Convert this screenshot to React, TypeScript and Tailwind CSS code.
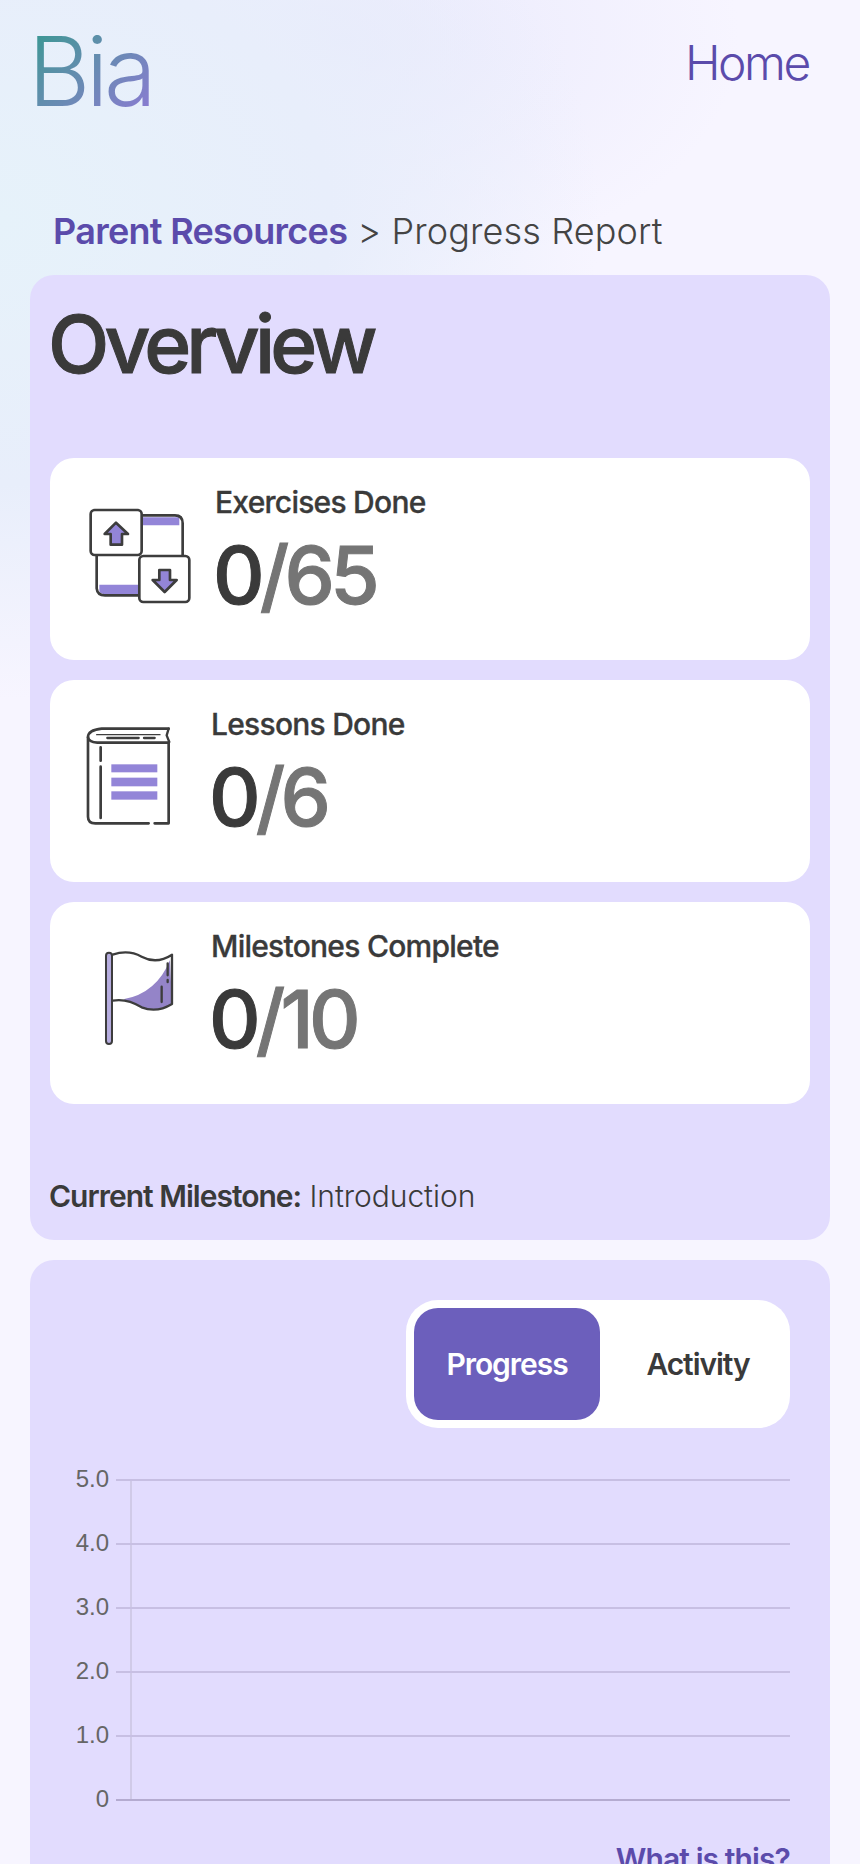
import React from 'react';

const ink = '#3d3d3d';

const ExercisesIcon = () => (
  <svg viewBox="0 0 165 202" className="w-[165px] h-[202px] shrink-0">
    <g transform="translate(10,22) scale(0.3333)" fill="none" stroke={ink} strokeLinejoin="round" strokeLinecap="round">
      <path d="M245 112 H358 V136 H245 Z" fill="#9385d8" stroke="none" />
      <path d="M118 314 H236 V342 H130 Q118 340 118 330 Z" fill="#9385d8" stroke="none" />
      <path d="M245 106 H345 Q368 106 368 130 V228" strokeWidth="8" />
      <path d="M110 228 V325 Q112 346 135 346 H236" strokeWidth="8" />
      <rect x="92" y="90" width="153" height="135" rx="12" fill="#fff" strokeWidth="8" />
      <rect x="238" y="228" width="150" height="138" rx="12" fill="#fff" strokeWidth="8" />
      <path d="M168 128 L204 162 H186 V194 H152 V162 H134 Z" fill="#9385d8" strokeWidth="8" />
      <path d="M314 336 L350 300 H330 V270 H298 V300 H278 Z" fill="#9385d8" strokeWidth="8" />
    </g>
  </svg>
);

const BookIcon = () => (
  <svg viewBox="0 0 161 202" className="w-[161px] h-[202px] shrink-0">
    <g transform="translate(10,20) scale(0.3333)" fill="none" stroke={ink} strokeLinecap="round" strokeLinejoin="round">
      <path d="M326 86 H125 Q84 90 84 112 Q86 126 112 128 H326" strokeWidth="8" />
      <path d="M326 86 L320 106 L328 126" strokeWidth="7" />
      <path d="M110 104 H300" strokeWidth="4" />
      <path d="M142 114 H236 M252 114 H284" strokeWidth="7" />
      <path d="M84 112 V350 Q84 370 106 370 H266 M284 370 H326 V128" strokeWidth="8" />
      <path d="M122 142 V182 M122 200 V354" strokeWidth="8" />
      <rect x="154" y="193" width="138" height="24" fill="#9385d8" stroke="none" />
      <rect x="154" y="233" width="138" height="26" fill="#9385d8" stroke="none" />
      <rect x="154" y="274" width="138" height="25" fill="#9385d8" stroke="none" />
    </g>
  </svg>
);

const FlagIcon = () => (
  <svg viewBox="0 0 161 202" className="w-[161px] h-[202px] shrink-0">
    <g transform="translate(10,28) scale(0.3333)" fill="none" stroke={ink} strokeLinecap="round" strokeLinejoin="round">
      <path d="M190 208 Q290 190 330 90 L336 222 Q290 250 245 232 Q215 216 190 208 Z" fill="#9484c8" stroke="none" />
      <rect x="138" y="68" width="18" height="274" rx="9" fill="#b6addf" strokeWidth="6" />
      <path d="M158 74 Q205 58 245 80 Q290 104 336 74 V222 Q290 250 245 232 Q200 204 158 212" strokeWidth="7" />
      <path d="M323 100 V136 M323 150 V156 M305 170 V216" strokeWidth="7" />
    </g>
  </svg>
);

const stats = [
  { label: 'Exercises Done', done: '0', total: '/65', Icon: ExercisesIcon },
  { label: 'Lessons Done', done: '0', total: '/6', Icon: BookIcon },
  { label: 'Milestones Complete', done: '0', total: '/10', Icon: FlagIcon },
];

const ticks = ['5.0', '4.0', '3.0', '2.0', '1.0', '0'];

export default function App() {
  return (
    <div className="h-[1864px] overflow-hidden font-['Inter',sans-serif] text-[#3a3a3a] bg-[#f7f5ff] bg-[radial-gradient(ellipse_600px_480px_at_0px_220px,#e6f2fa_0%,#e8eefb_55%,rgba(247,245,255,0)_100%),radial-gradient(ellipse_400px_240px_at_340px_40px,#e9e9fc_0%,rgba(247,245,255,0)_100%)]">
      {/* Header */}
      <header className="flex justify-between items-start h-[199px] pl-[28px] pr-[51px] pt-[13px]">
        <span className="text-[96px] leading-[116px] font-[350] tracking-[-0.045em] bg-linear-to-br from-[#1f9a8a] to-[#8f76d8] bg-clip-text text-transparent">
          Bia
        </span>
        <a className="text-[48px] leading-[58px] font-[350] tracking-[-0.05em] text-[#5b4bab] mt-[21px]">Home</a>
      </header>

      {/* Breadcrumb */}
      <div className="h-[76px] pl-[53px] pt-[10px] text-[36px] leading-[44px]">
        <span className="font-semibold tracking-[-0.02em] text-[#5b4bab]">Parent Resources</span>
        <span className="font-light tracking-[0.004em] text-[#444]"> &gt; Progress Report</span>
      </div>

      <main className="flex flex-col gap-[20px] px-[30px]">
        {/* Overview */}
        <section className="h-[965px] rounded-[24px] bg-[#e2dcfe] px-[20px]">
          <h1 className="h-[183px] pt-[20px] -ml-[2px] text-[80px] leading-[97px] font-medium tracking-[-0.06em] [-webkit-text-stroke:1px_#3a3a3a]">Overview</h1>
          <div className="flex flex-col gap-[20px]">
            {stats.map(({ label, done, total, Icon }) => (
              <div key={label} className="flex h-[202px] rounded-[24px] bg-white">
                <Icon />
                <div className="pt-[26px]">
                  <div className="text-[30px] leading-[36px] font-medium tracking-[-0.025em] [-webkit-text-stroke:0.3px_#3a3a3a]">{label}</div>
                  <div className="mt-[6px] -ml-[2px] text-[80px] leading-[97px] font-medium tracking-[-0.06em] [-webkit-text-stroke:1px]">
                    {done}
                    <span className="text-[#757575]">{total}</span>
                  </div>
                </div>
              </div>
            ))}
          </div>
          <p className="mt-[74px] -ml-[1px] text-[30px] leading-[36px] font-light tracking-[-0.002em]">
            <span className="font-semibold tracking-[-0.033em]">Current Milestone:</span> Introduction
          </p>
        </section>

        {/* Chart */}
        <section className="rounded-[24px] bg-[#e2dcfe] pt-[40px] px-[40px] pb-[40px]">
          <div className="flex justify-end">
            <div className="flex w-[384px] h-[128px] p-[8px] rounded-[32px] bg-white text-[30px] tracking-[-0.035em]">
              <button className="w-[186px] rounded-[24px] bg-[#6c5fbc] text-white font-semibold">Progress</button>
              <button className="flex-1 pl-[14px] font-semibold">Activity</button>
            </div>
          </div>
          <svg viewBox="70 1460 720 360" className="mt-[32px] w-[720px] h-[360px] font-['Liberation_Sans',sans-serif]">
            <path d="M131 1480 V1800" stroke="#d0cae8" strokeWidth="2" fill="none" />
            {ticks.map((t, i) => (
              <g key={t}>
                <path d="M116 0 H790" transform={`translate(0,${1480 + i * 64})`} stroke={i === 5 ? '#b4abd0' : '#c7bfe3'} strokeWidth="2" fill="none" />
                <text x="109" y={1487 + i * 64} textAnchor="end" fontSize="24" fill="#666">{t}</text>
              </g>
            ))}
          </svg>
          <div className="mt-[21px] text-right text-[30px] leading-[36px] font-semibold tracking-[-0.03em] text-[#5b4bab]">What is this?</div>
        </section>
      </main>
    </div>
  );
}
